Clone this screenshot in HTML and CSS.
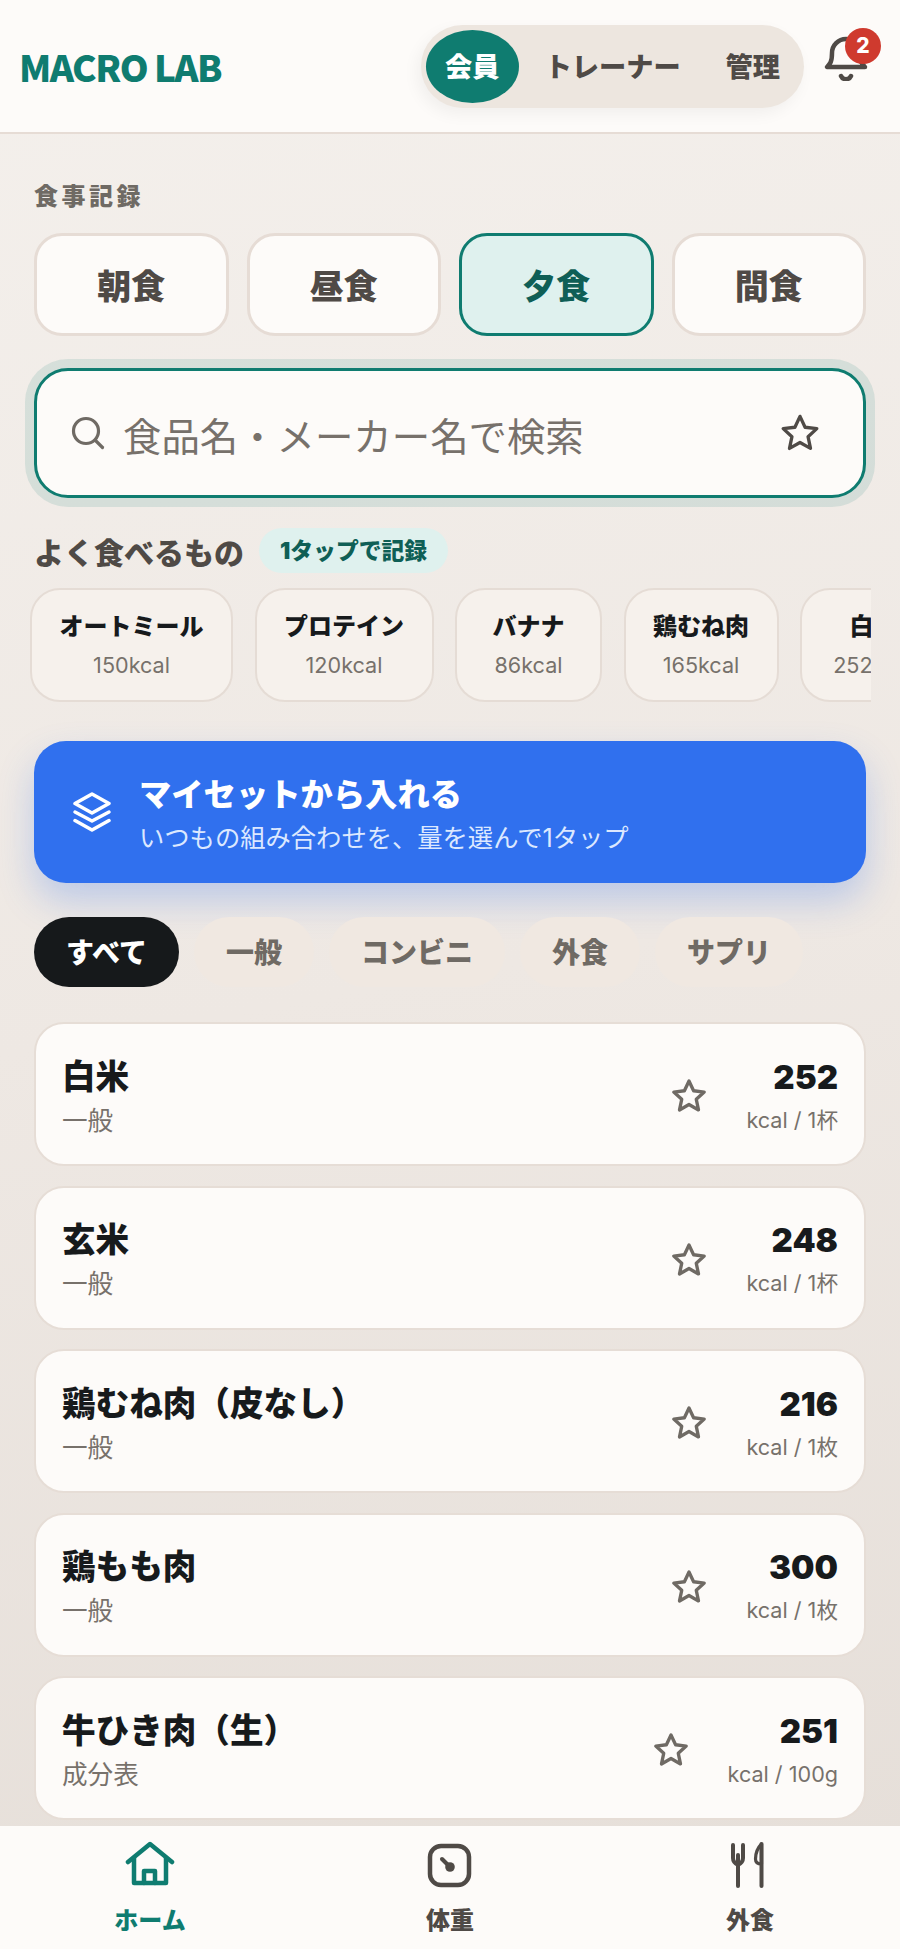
FILE: index.html
```html
<!DOCTYPE html>
<html lang="ja">
<head>
    <meta charset="UTF-8">
    <meta name="viewport" content="width=device-width, initial-scale=1.0">
    <title>MACRO LAB</title>
    <link rel="stylesheet" href="styles.css">
</head>
<body>
    <div class="app">
        <header class="topbar">
            <div class="logo">MACRO LAB</div>
            <div class="roles">
                <div class="role active">会員</div>
                <div class="role">トレーナー</div>
                <div class="role">管理</div>
            </div>
            <div class="bell">
                <svg viewBox="0 0 48 48" width="48" height="48" fill="none" stroke="#4f4a46" stroke-width="4.500" stroke-linecap="round" stroke-linejoin="round">
                    <path d="M5 34h38c-3-3-5-5-5-14a14 14 0 0 0-28 0c0 9-2 11-5 14z"/>
                    <path d="M19 43a5.500 5.500 0 0 0 10 0"/>
                </svg>
                <span class="badge">2</span>
            </div>
        </header>

        <main class="content">
            <div class="section-label">食事記録</div>
            <div class="meals">
                <button class="meal">朝食</button>
                <button class="meal">昼食</button>
                <button class="meal active">夕食</button>
                <button class="meal">間食</button>
            </div>

            <div class="search">
                <svg viewBox="0 0 34 34" width="34" height="34" fill="none" stroke="#6f6a64" stroke-width="3.200" stroke-linecap="round">
                    <circle cx="15" cy="15" r="12.500"/>
                    <path d="M24.500 24.500l7 7"/>
                </svg>
                <span class="search-text">食品名・メーカー名で検索</span>
                <svg class="search-star" viewBox="0 0 24 24" width="42" height="42" fill="none" stroke="#4f4a46" stroke-width="1.900" stroke-linejoin="round">
                    <path d="M12 2.500l2.900 6.200 6.700.8-5 4.600 1.400 6.700-6-3.400-6 3.400 1.400-6.700-5-4.600 6.700-.8z"/>
                </svg>
            </div>

            <div class="frequent-head">
                <h2>よく食べるもの</h2>
                <span class="chip">1タップで記録</span>
            </div>
            <div class="quick-row">
                <div class="quick"><b>オートミール</b><span>150kcal</span></div>
                <div class="quick"><b>プロテイン</b><span>120kcal</span></div>
                <div class="quick"><b>バナナ</b><span>86kcal</span></div>
                <div class="quick"><b>鶏むね肉</b><span>165kcal</span></div>
                <div class="quick"><b>白米</b><span>252kcal</span></div>
            </div>

            <div class="myset">
                <svg viewBox="0 0 40 40" width="40" height="40" fill="none" stroke="#fff" stroke-width="3.500" stroke-linecap="round" stroke-linejoin="round">
                    <path d="M20 2l17 9.500L20 21 3 11.500z"/>
                    <path d="M3 20l17 9 17-9"/>
                    <path d="M3 28.500l17 9.500 17-9.500"/>
                </svg>
                <div class="myset-text">
                    <div class="myset-title">マイセットから入れる</div>
                    <div class="myset-sub">いつもの組み合わせを、量を選んで1タップ</div>
                </div>
            </div>

            <div class="filters">
                <div class="filter active">すべて</div>
                <div class="filter">一般</div>
                <div class="filter">コンビニ</div>
                <div class="filter">外食</div>
                <div class="filter">サプリ</div>
            </div>

            <div class="foods">
                <div class="food">
                    <div class="food-main"><div class="food-name">白米</div><div class="food-sub">一般</div></div>
                    <svg class="star" viewBox="0 0 24 24" width="38" height="38" fill="none" stroke="#6f6a64" stroke-width="2.100" stroke-linejoin="round"><path d="M12 2.500l2.900 6.200 6.700.8-5 4.600 1.400 6.700-6-3.400-6 3.400 1.400-6.700-5-4.600 6.700-.8z"/></svg>
                    <div class="food-kcal"><div class="num">252</div><div class="unit">kcal / 1杯</div></div>
                </div>
                <div class="food">
                    <div class="food-main"><div class="food-name">玄米</div><div class="food-sub">一般</div></div>
                    <svg class="star" viewBox="0 0 24 24" width="38" height="38" fill="none" stroke="#6f6a64" stroke-width="2.100" stroke-linejoin="round"><path d="M12 2.500l2.900 6.200 6.700.8-5 4.600 1.400 6.700-6-3.400-6 3.400 1.400-6.700-5-4.600 6.700-.8z"/></svg>
                    <div class="food-kcal"><div class="num">248</div><div class="unit">kcal / 1杯</div></div>
                </div>
                <div class="food">
                    <div class="food-main"><div class="food-name">鶏むね肉（皮なし）</div><div class="food-sub">一般</div></div>
                    <svg class="star" viewBox="0 0 24 24" width="38" height="38" fill="none" stroke="#6f6a64" stroke-width="2.100" stroke-linejoin="round"><path d="M12 2.500l2.900 6.200 6.700.8-5 4.600 1.400 6.700-6-3.400-6 3.400 1.400-6.700-5-4.600 6.700-.8z"/></svg>
                    <div class="food-kcal"><div class="num">216</div><div class="unit">kcal / 1枚</div></div>
                </div>
                <div class="food">
                    <div class="food-main"><div class="food-name">鶏もも肉</div><div class="food-sub">一般</div></div>
                    <svg class="star" viewBox="0 0 24 24" width="38" height="38" fill="none" stroke="#6f6a64" stroke-width="2.100" stroke-linejoin="round"><path d="M12 2.500l2.900 6.200 6.700.8-5 4.600 1.400 6.700-6-3.400-6 3.400 1.400-6.700-5-4.600 6.700-.8z"/></svg>
                    <div class="food-kcal"><div class="num">300</div><div class="unit">kcal / 1枚</div></div>
                </div>
                <div class="food">
                    <div class="food-main"><div class="food-name">牛ひき肉（生）</div><div class="food-sub">成分表</div></div>
                    <svg class="star" viewBox="0 0 24 24" width="38" height="38" fill="none" stroke="#6f6a64" stroke-width="2.100" stroke-linejoin="round"><path d="M12 2.500l2.900 6.200 6.700.8-5 4.600 1.400 6.700-6-3.400-6 3.400 1.400-6.700-5-4.600 6.700-.8z"/></svg>
                    <div class="food-kcal"><div class="num">251</div><div class="unit">kcal / 100g</div></div>
                </div>
            </div>
        </main>

        <nav class="tabs">
            <div class="tab active">
                <svg viewBox="0 0 50 50" width="50" height="50" fill="none" stroke="#0f7c70" stroke-width="4.500" stroke-linecap="round" stroke-linejoin="round">
                    <path d="M3 22L25 4l22 18"/>
                    <path d="M9 18v25h32V18"/>
                    <path d="M19 43V31h11v12"/>
                </svg>
                <span>ホーム</span>
            </div>
            <div class="tab">
                <svg viewBox="0 0 50 50" width="50" height="50" fill="none" stroke="#4f4a46" stroke-width="4.500" stroke-linecap="round">
                    <rect x="5" y="6" width="39" height="39" rx="11"/>
                    <path d="M17 19l8 8" stroke-width="4"/>
                    <circle cx="25" cy="27" r="4.800" fill="#4f4a46" stroke="none"/>
                </svg>
                <span>体重</span>
            </div>
            <div class="tab">
                <svg viewBox="0 0 50 50" width="50" height="50" fill="none" stroke="#4f4a46" stroke-width="4" stroke-linecap="round" stroke-linejoin="round">
                    <path d="M8 5v13c0 4 3 6 5 7 2-1 5-3 5-7V5"/>
                    <path d="M13 15v31"/>
                    <path d="M36.500 4c-4 4-6 10-6 15 0 3 2 5 6 5z" stroke-width="3.200"/>
                    <path d="M36.500 4v42"/>
                </svg>
                <span>外食</span>
            </div>
        </nav>
    </div>
</body>
</html>
```

FILE: styles.css
```css
* {
    box-sizing: border-box;
}

html, body {
    margin: 0;
    padding: 0;
    height: 100%;
}

body {
    font-family: Inter, "Noto Sans CJK JP", sans-serif;
    color: #171a1c;
}

.app {
    display: flex;
    flex-direction: column;
    height: 1949px;
    overflow: hidden;
    background: linear-gradient(170deg, #f4f0ec 0%, #eee8e3 50%, #e5ded8 100%);
}

.topbar {
    flex: none;
    display: flex;
    align-items: center;
    height: 134px;
    padding: 0 30px 0 19px;
    background: #fdfbf9;
    border-bottom: 2px solid #e6dcd5;
}

.logo {
    font-family: "Noto Sans CJK JP", sans-serif;
    font-size: 36.800px;
    font-weight: 900;
    letter-spacing: -1.500px;
    color: #0f7c70;
}

.roles {
    display: flex;
    align-items: center;
    margin-left: auto;
    height: 83px;
    padding: 5px;
    border-radius: 42px;
    background: #ede6df;
    box-shadow: -4px 6px 16px rgba(0, 0, 0, 0.05);
}

.role {
    font-size: 27.200px;
    font-weight: 900;
    color: #4f4a46;
    padding: 2px 19px 0 26px;
    line-height: 71px;
}

.role.active {
    width: 93px;
    padding: 2px 0 0;
    text-align: center;
    border-radius: 47px / 37px;
    background: #0f7c70;
    color: #fff;
}

.bell {
    position: relative;
    width: 48px;
    height: 48px;
    margin-left: 18px;
    margin-bottom: 19px;
}

.badge {
    position: absolute;
    top: -5px;
    right: -11px;
    width: 36px;
    height: 36px;
    border-radius: 50%;
    background: #cf3a2e;
    color: #fff;
    font-size: 21px;
    font-weight: 800;
    line-height: 36px;
    text-align: center;
}

.content {
    flex: 1;
    min-height: 0;
    overflow: hidden;
    padding: 45px 34px 0;
}

.section-label {
    font-size: 24px;
    font-weight: 900;
    letter-spacing: 3.500px;
    line-height: 36px;
    color: #6f6a64;
}

.meals {
    display: grid;
    grid-template-columns: repeat(4, 1fr);
    gap: 18px;
    margin-top: 18px;
}

.meal {
    height: 103px;
    border: 3px solid #e6dcd5;
    border-radius: 28px;
    background: #fdfbf9;
    font-family: inherit;
    font-size: 34px;
    font-weight: 900;
    color: #4f4a46;
}

.meal.active {
    border-color: #0f7c70;
    background: #dff1ee;
    color: #0f5f56;
}

.search {
    display: flex;
    align-items: center;
    height: 130px;
    margin-top: 32px;
    padding: 0 42px 0 34px;
    border: 3px solid #0f7c70;
    border-radius: 34px;
    background: #fdfbf9;
    box-shadow: 0 0 0 9px rgba(15, 124, 112, 0.12);
}

.search-text {
    margin-left: 18px;
    padding-top: 2px;
    font-size: 38.400px;
    color: #77716b;
}

.search-star {
    margin-left: auto;
}

.frequent-head {
    display: flex;
    align-items: center;
    gap: 15px;
    margin-top: 30px;
}

.frequent-head h2 {
    margin: 0;
    font-size: 30px;
    font-weight: 900;
    color: #4f4a46;
}

.chip {
    height: 45px;
    padding: 0 21px;
    border-radius: 23px;
    background: #dff1ee;
    color: #0f5f56;
    font-size: 22.800px;
    font-weight: 900;
    line-height: 45px;
}

.quick-row {
    display: flex;
    gap: 21.500px;
    margin: 15px -5px 0 -4px;
    overflow: hidden;
}

.quick {
    flex: none;
    display: flex;
    flex-direction: column;
    align-items: center;
    min-width: 147px;
    height: 114px;
    padding: 19px 27.500px 0;
    border: 2px solid #e5dcd5;
    border-radius: 30px;
    background: #f6f1ec;
}

.quick b {
    font-size: 24px;
    font-weight: 900;
    line-height: 36px;
}

.quick span {
    margin-top: 7px;
    font-size: 21.600px;
    color: #77716b;
}

.myset {
    display: flex;
    align-items: center;
    gap: 27px;
    height: 142px;
    margin-top: 39px;
    padding: 0 38px;
    border-radius: 32px;
    background: #3070ee;
    box-shadow: 0 18px 36px rgba(48, 112, 238, 0.26);
    color: #fff;
}

.myset-text {
    padding-top: 4px;
}

.myset-title {
    font-size: 32.300px;
    font-weight: 900;
    line-height: 48px;
}

.myset-sub {
    font-size: 25.300px;
    line-height: 38px;
    color: #dce8ff;
}

.filters {
    display: flex;
    gap: 15px;
    margin-top: 34px;
}

.filter {
    height: 70px;
    padding: 2px 32px 0;
    border-radius: 35px;
    background: #f0e8e1;
    color: #6f6a64;
    font-size: 28px;
    font-weight: 900;
    line-height: 68px;
}

.filter.active {
    background: #16191b;
    color: #fff;
}

.foods {
    display: flex;
    flex-direction: column;
    gap: 19.500px;
    margin-top: 35px;
}

.food {
    flex: none;
    display: flex;
    align-items: center;
    height: 144px;
    padding: 0 26px;
    border: 2px solid #e6ddd6;
    border-radius: 30px;
    background: #fdfbf9;
}

.food-main {
    flex: 1;
    padding-top: 4px;
}

.food-name {
    font-size: 33.600px;
    font-weight: 900;
    line-height: 46px;
}

.food-sub {
    margin-top: 3px;
    font-size: 25.600px;
    line-height: 36px;
    color: #77716b;
}

.star {
    margin: 4px 38px 0 0;
}

.food-kcal {
    padding-top: 4px;
    text-align: right;
}

.num {
    font-size: 33px;
    font-weight: 900;
    line-height: 44px;
}

.unit {
    margin-top: 3px;
    font-size: 21.600px;
    line-height: 36px;
    color: #77716b;
}

.tabs {
    flex: none;
    display: grid;
    grid-template-columns: repeat(3, 1fr);
    height: 123px;
    background: #fdfbf9;
}

.tab {
    display: flex;
    flex-direction: column;
    align-items: center;
    padding-top: 14px;
    font-size: 24px;
    font-weight: 900;
    color: #4f4a46;
}

.tab span {
    line-height: 36px;
    margin-top: 13px;
}

.tab.active {
    color: #0f7c70;
}
```
